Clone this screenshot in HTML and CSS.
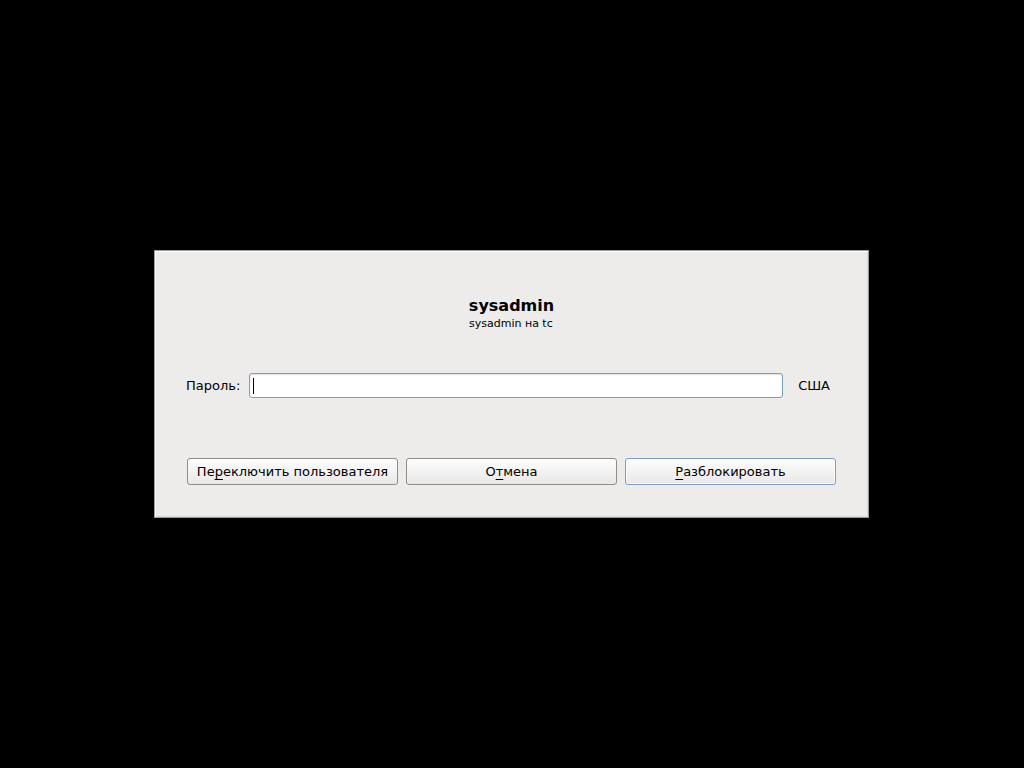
FILE: index.html
```html
<!DOCTYPE html>
<html>
<head>
<meta charset="utf-8">
<link rel="stylesheet" href="styles.css">
</head>
<body>
<div class="dialog">
  <div class="header">
    <div class="title">sysadmin</div>
    <div class="subtitle">sysadmin на tc</div>
  </div>
  <div class="row">
    <span class="label">Пароль:</span>
    <div class="entry"><span class="cursor"></span></div>
    <span class="layout">США</span>
  </div>
  <div class="buttons">
    <button class="btn">Пе<u>р</u>еключить пользователя</button>
    <button class="btn">О<u>т</u>мена</button>
    <button class="btn default"><u>Р</u>азблокировать</button>
  </div>
</div>
</body>
</html>
```
FILE: styles.css
```css
html, body {
  margin: 0;
  padding: 0;
  background: #000;
  width: 1024px;
  height: 768px;
}
body {
  display: flex;
  align-items: center;
  justify-content: center;
  font-family: "DejaVu Sans", sans-serif;
  font-size: 13px;
  color: #000;
}
.dialog {
  width: 715px;
  height: 268px;
  margin-right: 1px;
  box-sizing: border-box;
  border: 1px solid #9d9c9a;
  box-shadow: inset 1px 1px 0 #fbfbfa, inset -1px -1px 0 #dcdad7;
  background: #edeceb;
  padding: 0 32px;
  display: flex;
  flex-direction: column;
}
.header {
  margin-top: 45px;
  display: flex;
  flex-direction: column;
  align-items: center;
}
.title {
  font-weight: bold;
  font-size: 16px;
  line-height: 19px;
}
.subtitle {
  font-size: 11px;
  line-height: 14px;
  margin-top: 2px;
  width: 85px;
  overflow: hidden;
  white-space: nowrap;
}
.row {
  margin-top: 42px;
  display: flex;
  align-items: center;
  height: 25px;
}
.label {
  margin-left: -1px;
  margin-right: 9px;
}
.entry {
  flex: 1;
  height: 25px;
  box-sizing: border-box;
  border: 1px solid #7b9cc8;
  border-radius: 3px;
  background: #fff;
  box-shadow: inset 0 1px 1px rgba(0,0,0,0.12);
  display: flex;
  align-items: center;
  padding-left: 3px;
}
.cursor {
  width: 1px;
  height: 16px;
  background: #000;
}
.layout {
  margin-left: 15px;
  margin-right: 6px;
}
.buttons {
  margin-top: 60px;
  display: flex;
  gap: 8px;
}
.btn {
  flex: 1;
  height: 27px;
  box-sizing: border-box;
  border: 1px solid #8e8d8b;
  border-radius: 3px;
  background: linear-gradient(#fdfdfd, #e9e8e7);
  font-family: "DejaVu Sans", sans-serif;
  font-size: 13px;
  color: #000;
  padding: 0;
  margin: 0;
}
.btn u {
  text-decoration-thickness: 1px;
  text-underline-offset: 3px;
}
.btn.default {
  border-color: #7f9cc5;
  box-shadow: inset 0 0 0 1px #fbfcfe;
}
```
